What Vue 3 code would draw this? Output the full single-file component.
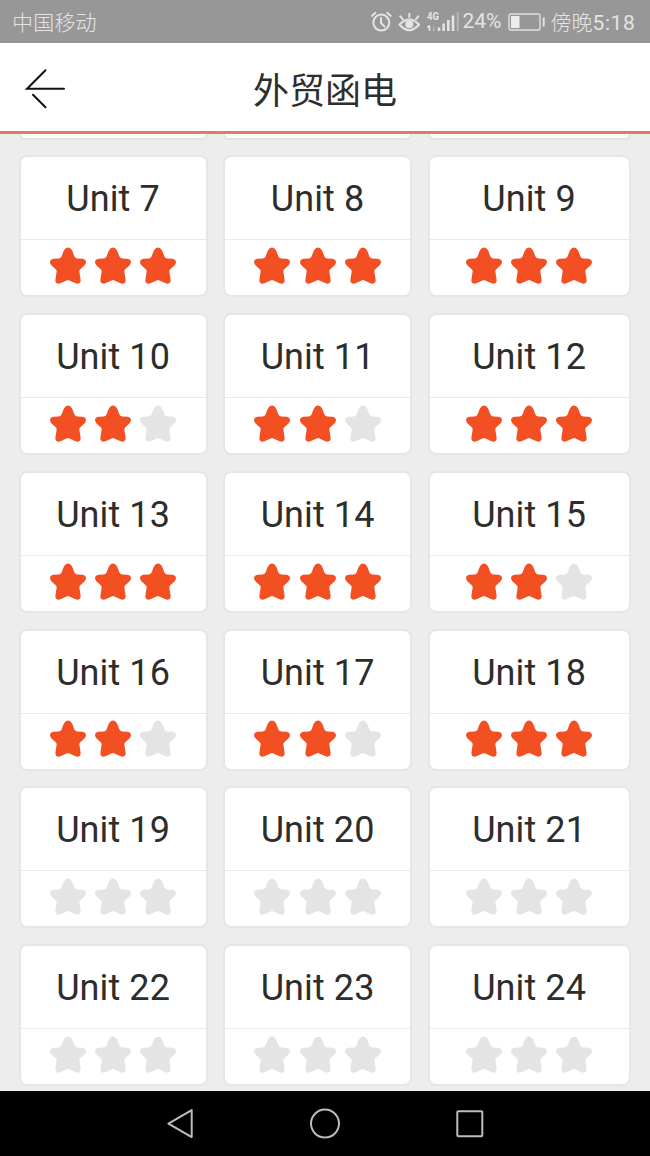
<script setup>
const scores = [3, 3, 3, 2, 2, 3, 3, 3, 2, 2, 2, 3, 0, 0, 0, 0, 0, 0]
const units = scores.map((stars, i) => ({ name: `Unit ${i + 7}`, stars }))
</script>

<template>
  <div class="screen">
    <div class="status">
      <span class="carrier">中国移动</span>
      <svg class="indicators" width="98" height="43" viewBox="0 0 98 43" fill="none" stroke="#e4e4e4">
        <g stroke-width="2" stroke-linecap="round">
          <circle cx="15.3" cy="22.6" r="8" />
          <path d="M15 18v5l3.6 3.6M6 15.8l3.4-3M24.6 15.8l-3.4-3" />
          <path d="M33.5 24.5Q43.3 14.5 53 24.5Q43.3 36 33.5 24.5ZM43.3 17v-3.3M36.7 19l-2.5-2.8M50 19l2.5-2.8" />
        </g>
        <circle cx="43.3" cy="24.3" r="4" fill="#e4e4e4" stroke="none" />
        <path d="M63.5 25.5v5.5M61.3 27.6l2.2-2" stroke-width="1.6" />
        <path d="M67.5 25.5v5.5l2-2.2" stroke-width="1" opacity=".4" />
        <path d="M73 31v-3.5M77.6 31v-7.5M82.3 31v-11M87 31v-15.5" stroke-width="2.6" />
        <path d="M91.8 31v-19" stroke-width="2.4" opacity=".35" />
        <text x="61" y="20" textLength="12" lengthAdjust="spacingAndGlyphs" class="network">4G</text>
      </svg>
      <span class="percent">24%</span>
      <svg class="battery" width="38" height="18" viewBox="0 0 38 18">
        <rect x="1" y="1" width="31" height="16" rx="2" fill="none" stroke="#e0e0e0" stroke-width="1.4" />
        <rect x="3" y="3" width="8.5" height="12" fill="#ececec" />
        <path d="M35.7 4.5v9" stroke="#e0e0e0" stroke-width="2" />
      </svg>
      <span class="time">傍晚<span class="clock">5:18</span></span>
    </div>

    <header class="header">
      <svg class="back" width="44" height="44" viewBox="0 0 44 44" fill="none" stroke="#111" stroke-width="2" stroke-linecap="round">
        <path d="M23.5 4.2L5 22.8H42M11 28.8L23.5 41.3" />
      </svg>
      <h1>外贸函电</h1>
    </header>

    <main class="content">
      <div class="grid">
        <div v-for="n in 3" :key="'previous' + n" class="previous"></div>
        <div v-for="unit in units" :key="unit.name" class="card">
          <div class="name">{{ unit.name }}</div>
          <div class="stars">
            <svg v-for="n in 3" :key="n" :class="{ earned: n <= unit.stars }" width="36" height="37" viewBox="0 0 36 37">
              <path d="M14.6 2.4Q16 .5 18 .5Q20 .5 21.4 2.4C23 4.7 23.6 7.7 24.6 9.8Q25.4 11.3 27.4 11.4L32.6 11.7Q36 12.2 36 15.2Q36 16.8 34.4 18.4L30 22.6Q29.2 23.6 29.4 25L30.6 32.5Q31 36.5 27.7 36.7Q26.4 36.7 25 36L19.4 33.4Q18 32.8 16.6 33.4L11 36Q9.6 36.7 8.3 36.7Q5 36.5 5.4 32.5L6.6 25Q6.8 23.6 6 22.6L1.6 18.4Q0 16.8 0 15.2Q0 12.2 3.4 11.7L8.6 11.4Q10.6 11.3 11.4 9.8C12.4 7.7 13 4.7 14.6 2.4Z" />
            </svg>
          </div>
        </div>
      </div>
    </main>

    <nav class="navbar">
      <svg width="30" height="32" viewBox="0 0 30 32"><path d="M3.4 15.6L26.7 2.1V29.1Z" /></svg>
      <svg width="32" height="32" viewBox="0 0 32 32"><circle cx="16" cy="15.6" r="14" /></svg>
      <svg width="30" height="32" viewBox="0 0 30 32"><rect x="2.3" y="3.3" width="25" height="25" rx="1" /></svg>
    </nav>
  </div>
</template>

<style>
body { background: #ededed; }
</style>

<style scoped>
.screen {
  width: 650px;
  height: 1156px;
  display: flex;
  flex-direction: column;
  overflow: hidden;
  background: #ededed;
  font-family: Roboto, "Noto Sans CJK SC", sans-serif;
}
.status {
  height: 43px;
  flex: none;
  display: flex;
  align-items: center;
  padding: 0 14px 0 12px;
  background: #979797;
  color: #e4e4e4;
  font-size: 21px;
  line-height: 43px;
  white-space: nowrap;
}
.carrier { padding-top: 4px; font-weight: 300; letter-spacing: 0.2px; }
.indicators { margin-left: auto; flex: none; }
.network {
  fill: #e4e4e4;
  stroke: none;
  font: bold 11px Roboto, sans-serif;
}
.percent { width: 45px; font-size: 21px; margin-left: -1px; }
.battery { margin-right: 5px; flex: none; }
.time { width: 85.5px; padding-top: 3px; font-weight: 300; }
.clock { font-weight: 400; letter-spacing: 0.6px; }
.header {
  height: 88px;
  flex: none;
  display: grid;
  grid-template-columns: 100px 1fr 100px;
  align-items: center;
  background: #fff;
  border-bottom: 3px solid #e17b69;
}
.back { margin-left: 22px; margin-top: 1px; }
h1 {
  margin: 10px 0 0;
  text-align: center;
  font-size: 36px;
  line-height: 50px;
  font-weight: 400;
  color: #2e2e2e;
}
.content { flex: 1; min-height: 0; overflow: hidden; }
.grid {
  display: grid;
  grid-template-columns: 189px 189px 203px;
  column-gap: 15.5px;
  row-gap: 15.8px;
  padding-left: 18.6px;
}
.previous {
  height: 5.5px;
  box-sizing: border-box;
  background: #fff;
  border: 2px solid #e2e2e2;
  border-top: 0;
  border-radius: 0 0 7px 7px;
}
.card {
  height: 142px;
  box-sizing: border-box;
  background: #fff;
  border: 2px solid #e6e6e6;
  border-radius: 8px;
}
.name {
  height: 83px;
  box-sizing: border-box;
  border-bottom: 1px solid #e9e9e9;
  text-align: center;
  color: #2d2d2d;
  font-size: 36px;
  line-height: 85px;
  letter-spacing: 0.1px;
}
.stars {
  display: flex;
  justify-content: center;
  gap: 9.2px;
  padding-top: 6.8px;
}
.stars svg { fill: #e4e4e4; }
.stars .earned { fill: #f24f23; }
.navbar {
  height: 65px;
  flex: none;
  display: flex;
  align-items: center;
  justify-content: center;
  gap: 114px;
  background: #000;
}
.navbar svg { fill: none; stroke: #bdbdbd; stroke-width: 2; stroke-linejoin: round; }
</style>
